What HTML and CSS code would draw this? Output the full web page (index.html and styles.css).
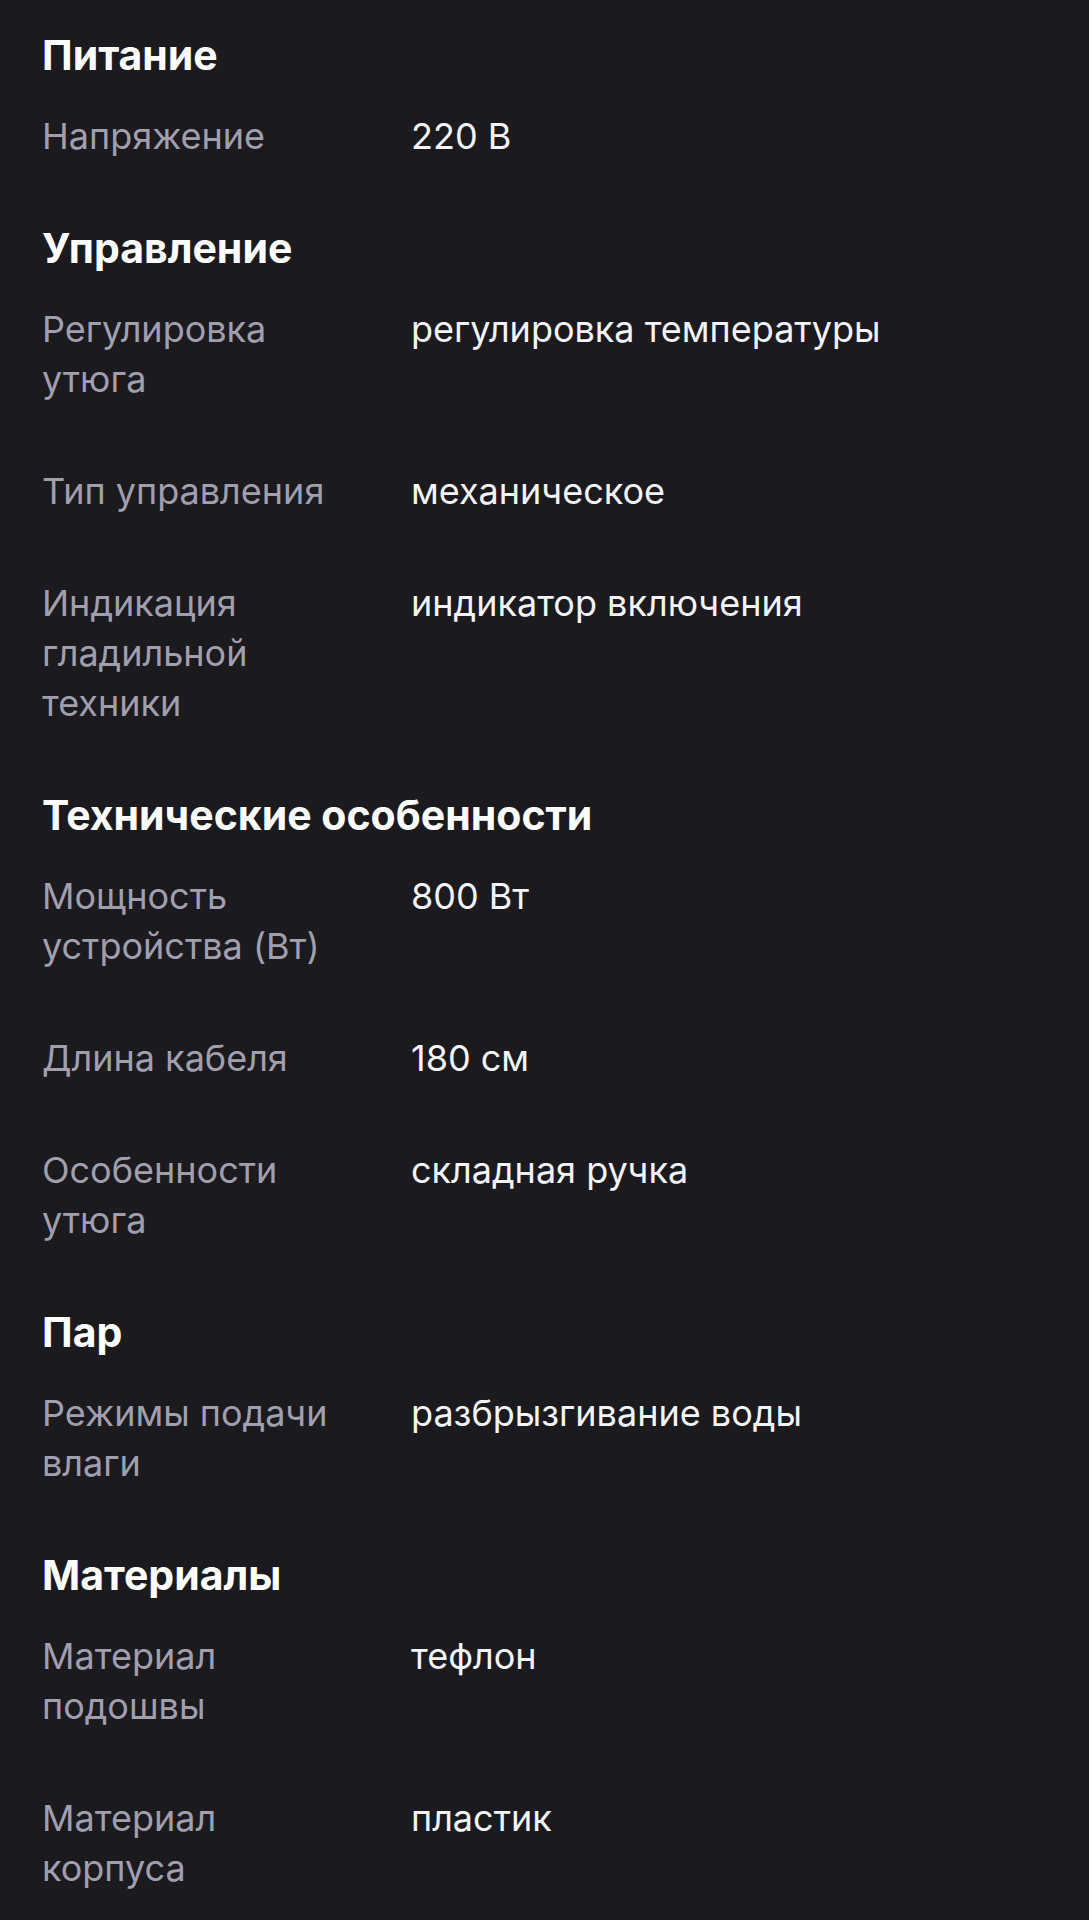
FILE: index.html
```html
<!DOCTYPE html>
<html lang="ru">
<head>
<meta charset="utf-8">
<title>Характеристики</title>
<link rel="stylesheet" href="styles.css">
</head>
<body>
<main class="specs">
  <section class="group">
    <h2 class="group-title">Питание</h2>
    <div class="row"><div class="label">Напряжение</div><div class="value">220 В</div></div>
  </section>
  <section class="group">
    <h2 class="group-title">Управление</h2>
    <div class="row"><div class="label">Регулировка утюга</div><div class="value">регулировка температуры</div></div>
    <div class="row"><div class="label">Тип управления</div><div class="value">механическое</div></div>
    <div class="row"><div class="label">Индикация гладильной техники</div><div class="value">индикатор включения</div></div>
  </section>
  <section class="group">
    <h2 class="group-title">Технические особенности</h2>
    <div class="row"><div class="label">Мощность устройства (Вт)</div><div class="value">800 Вт</div></div>
    <div class="row"><div class="label">Длина кабеля</div><div class="value">180 см</div></div>
    <div class="row"><div class="label">Особенности утюга</div><div class="value">складная ручка</div></div>
  </section>
  <section class="group">
    <h2 class="group-title">Пар</h2>
    <div class="row"><div class="label">Режимы подачи влаги</div><div class="value">разбрызгивание воды</div></div>
  </section>
  <section class="group">
    <h2 class="group-title">Материалы</h2>
    <div class="row"><div class="label">Материал подошвы</div><div class="value">тефлон</div></div>
    <div class="row"><div class="label">Материал корпуса</div><div class="value">пластик</div></div>
  </section>
</main>
</body>
</html>
```
FILE: styles.css
```css
html, body {
  margin: 0;
  padding: 0;
  background: #1b1a1f;
}
body {
  font-family: Inter, "Noto Sans", sans-serif;
  color: #f4f4f6;
}
.specs {
  padding: 30px 42px 0 42px;
  display: flex;
  flex-direction: column;
}
.group {
  display: flex;
  flex-direction: column;
}
.group-title {
  margin: 0 0 31px 0;
  font-size: 41px;
  line-height: 50px;
  font-weight: 700;
  color: #ffffff;
}
.row {
  display: grid;
  grid-template-columns: 310px 1fr;
  column-gap: 59px;
  margin-bottom: 62px;
  font-size: 36px;
  line-height: 50px;
}
.label {
  color: #a19fae;
}
.value {
  color: #f4f4f6;
}
```
